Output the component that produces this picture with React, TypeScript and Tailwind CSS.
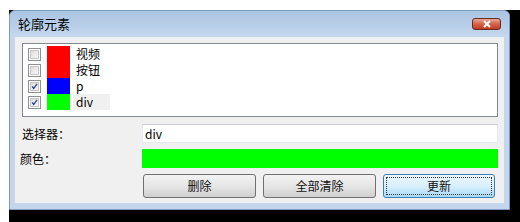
import React from 'react';

const font = { fontFamily: '"Noto Sans CJK SC", "Liberation Sans", sans-serif' };

type Item = { label: string; color: string; checked: boolean; selected?: boolean };

const items: Item[] = [
  { label: '视频', color: 'bg-[#ff0000]', checked: false },
  { label: '按钮', color: 'bg-[#ff0000]', checked: false },
  { label: 'p', color: 'bg-[#0000ff]', checked: true },
  { label: 'div', color: 'bg-[#00ff00]', checked: true, selected: true },
];

function Checkbox({ checked }: { checked: boolean }) {
  return (
    <div className="w-[13px] h-[13px] border border-[#8e8f8f] bg-white p-[1px]">
      <div className="relative w-full h-full border border-[#c6c6c6] bg-gradient-to-br from-[#dcdcdc] to-[#f8f8f8]">
        {checked && (
          <svg viewBox="0 0 9 9" className="absolute inset-0 w-full h-full">
            <path d="M1.5 4.5 L3.5 7 L7.8 1.2" fill="none" stroke="#2b3f9c" strokeWidth="1.6" />
          </svg>
        )}
      </div>
    </div>
  );
}

function Button({ label, primary }: { label: string; primary?: boolean }) {
  if (primary) {
    return (
      <button className="h-[24px] w-[112px] rounded-[3px] border border-[#3c7fb1] bg-gradient-to-b from-[#eaf6fd] via-[#d9f0fc] to-[#a7d9f5] p-[2px] text-[12px] text-[#111]">
        <div className="flex h-full w-full items-center justify-center border border-dotted border-[#333]">{label}</div>
      </button>
    );
  }
  return (
    <button className="flex h-[24px] w-[113px] items-center justify-center rounded-[3px] border border-[#707070] bg-gradient-to-b from-[#f2f2f2] via-[#e6e6e6] to-[#cfcfcf] text-[12px] text-[#111]">
      {label}
    </button>
  );
}

export default function App() {
  return (
    <div className="w-[520px] h-[222px] bg-white pl-[9px] pt-[10px] overflow-hidden" style={font}>
      <div className="w-[511px] h-[212px] bg-black">
        <div className="flex h-[200px] w-[501px] flex-col rounded-t-[6px] border border-[#7e9cc0] bg-[#c3d6ec]">
          {/* title bar */}
          <div className="flex h-[26px] items-center justify-between bg-gradient-to-b from-[#aac4e2] to-[#c4d8ee] pl-[8px] pr-[8px] rounded-t-[6px]">
            <span className="text-[13px] text-black">轮廓元素</span>
            <div className="flex h-[12px] w-[29px] items-center justify-center rounded-[3px] border border-[#6b2a20] bg-gradient-to-b from-[#e7a898] via-[#d3624a] to-[#c23b20]">
              <svg viewBox="0 0 10 8" className="h-[8px] w-[10px]">
                <path d="M2 1 L8 7 M8 1 L2 7" stroke="white" strokeWidth="2" />
              </svg>
            </div>
          </div>
          {/* client area */}
          <div className="mx-[5px] flex h-[166px] flex-col bg-[#f0f0f0] pl-[7px] pr-[6px] pt-[6px]">
            <div className="h-[74px] border border-[#828790] bg-white pt-[2px] pl-[5px]">
              {items.map((it) => (
                <div key={it.label} className="flex h-[16px] items-center">
                  <Checkbox checked={it.checked} />
                  <div className={`ml-[6px] h-[16px] w-[23px] ${it.color}`} />
                  <div
                    className={`ml-[3px] flex h-[16px] w-[37px] items-center px-[3px] text-[12px] leading-none text-black ${
                      it.selected ? 'bg-[#f0f0f0]' : ''
                    }`}
                  >
                    {it.label}
                  </div>
                </div>
              ))}
            </div>
            <div className="mt-[7px] flex h-[19px] items-center">
              <span className="w-[120px] text-[12px] text-black">选择器：</span>
              <div className="flex h-[19px] flex-1 items-center border border-[#e3e9ef] border-t-[#c9ccd2] bg-white px-[2px] text-[12px] text-black">
                div
              </div>
            </div>
            <div className="mt-[6px] flex h-[19px] items-center">
              <span className="-ml-[2px] w-[122px] text-[12px] text-black">颜色：</span>
              <div className="h-[19px] flex-1 bg-[#00ff00]" />
            </div>
            <div className="mt-[6px] flex gap-[7px] pl-[121px]">
              <Button label="删除" />
              <Button label="全部清除" />
              <Button label="更新" primary />
            </div>
          </div>
        </div>
      </div>
    </div>
  );
}
